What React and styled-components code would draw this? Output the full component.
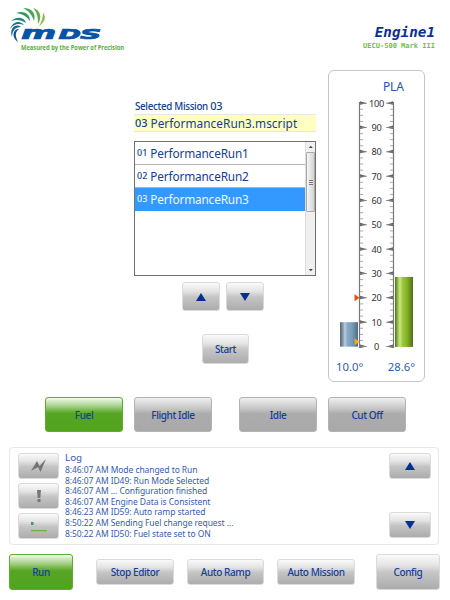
import React from "react";
import styled, { createGlobalStyle, css } from "styled-components";

const GlobalStyle = createGlobalStyle`
  * { box-sizing: border-box; }
  body { margin: 0; background: #fff; overflow: hidden; }
`;

const navy = "#12409c";

const Page = styled.main`
  width: 450px;
  height: 600px;
  display: flex;
  flex-direction: column;
  background: #fff;
  color: ${navy};
  font-family: "Noto Sans", "Open Sans", sans-serif;
`;

const Header = styled.header`
  height: 70px;
  flex: none;
  display: flex;
  justify-content: space-between;
  padding: 0 15px 0 0;
`;

const Titles = styled.div`
  display: flex;
  flex-direction: column;
  align-items: flex-end;
  padding-top: 23px;
  font-family: "DejaVu Sans Mono", monospace;
  font-weight: bold;
  white-space: nowrap;
`;

const EngineName = styled.h1`
  margin: 0;
  font-size: 14.3px;
  line-height: 18px;
  font-style: italic;
  color: #0a2f9a;
`;

const EngineModel = styled.div`
  font-size: 7px;
  line-height: 11px;
  letter-spacing: 0.02px;
  color: #6cc143;
`;

const Workspace = styled.section`
  height: 312px;
  flex: none;
  display: grid;
  grid-template-columns: 182px 97px;
  column-gap: 12px;
  padding-left: 134px;
`;

const MissionColumn = styled.div`
  display: flex;
  flex-direction: column;
  padding-top: 26px;
  white-space: nowrap;
`;

const Label = styled.span`
  font-size: ${(p) => p.$size || 11}px;
  letter-spacing: ${(p) => p.$track || 0}px;
  font-weight: ${(p) => p.$weight || 400};
  white-space: pre;
`;

const MissionCaption = styled.div`
  height: 18px;
  line-height: 16px;
  padding-left: 1px;
`;

const MissionFile = styled.div`
  height: 18px;
  line-height: 18px;
  padding-left: 1px;
  background: #ffffc0;
  border: solid #e4e7e3;
  border-width: 1px 0;
  display: flex;
  align-items: center;
`;

const ListBox = styled.div`
  height: 135px;
  margin-top: 9px;
  border: 1px solid #707070;
  display: flex;
`;

const ListRows = styled.div`
  flex: 1;
`;

const ListRow = styled.div`
  height: 23px;
  display: flex;
  align-items: center;
  gap: 3px;
  padding: 0 0 1px 2px;
  border-bottom: 1px solid #b4b4b4;
  ${(p) =>
    p.$selected &&
    css`
      background: #3399ff;
      color: #eef7ff;
      border-color: #3399ff;
    `}
`;

const ScrollTrack = styled.div`
  width: 10px;
  display: flex;
  flex-direction: column;
  align-items: center;
  background: #f0f0f0;
  border-left: 1px solid #ddd;
`;

const ScrollThumb = styled.div`
  width: 9px;
  height: 60px;
  border: 1px solid #aaa;
  border-radius: 1px;
  background: linear-gradient(90deg, #f5f5f5, #d4d4d4);
  display: flex;
  align-items: center;
  justify-content: center;
`;

const ScrollGrip = styled.div`
  width: 4px;
  height: 5px;
  background: repeating-linear-gradient(#777 0 1px, #e6e6e6 1px 2px);
`;

const ScrollSpace = styled.div`
  flex: 1;
`;

const StepButtons = styled.div`
  display: flex;
  gap: 6px;
  padding: 6px 0 0 48px;
`;

const grey = css`
  border: 1px solid #dadada;
  background: linear-gradient(#fafafa 0%, #e4e4e4 30%, #c5c5c5 52%, #acacac 100%);
`;

const flatGrey = css`
  border: 1px solid #b3b3b3;
  background: linear-gradient(#efefef 0%, #c9c9c9 30%, #acacac 48%, #a9a9a9 100%);
`;

const green = css`
  border: 1px solid #5cae2c;
  background: linear-gradient(#f3faef 0%, #a5d088 25%, #56a624 46%, #52a31c 100%);
`;

const tones = { grey, flatGrey, green };

const Button = styled.button`
  width: ${(p) => p.$w}px;
  height: ${(p) => p.$h}px;
  flex: none;
  padding: 0;
  border-radius: 3px;
  display: flex;
  align-items: center;
  justify-content: center;
  color: ${navy};
  font-family: "Noto Sans", sans-serif;
  font-weight: 500;
  font-size: 10px;
  letter-spacing: -0.4px;
  white-space: nowrap;
  ${(p) => tones[p.$tone || "grey"]}
`;

const StartRow = styled.div`
  display: flex;
  padding: 23px 0 0 68px;
`;

const GaugePanel = styled.div`
  height: 312px;
  border: 1px solid #c6c6c6;
  border-radius: 6px;
  display: flex;
  flex-direction: column;
`;

const GaugeTitle = styled.div`
  height: 27px;
  padding: 6px 0 0 54px;
  font-size: 12px;
  line-height: 20px;
  letter-spacing: -0.2px;
  color: #2952ad;
`;

const GaugeReadings = styled.div`
  display: flex;
  justify-content: space-between;
  padding: 4px 9px 0 7px;
  font-size: 11.3px;
  line-height: 16px;
  color: #365cae;
`;

const ModeBar = styled.nav`
  display: grid;
  grid-template-columns: 78px 78px 78px 78px;
  column-gap: 11px;
  padding: 15px 0 0 45px;

  & > :nth-child(n + 3) { margin-left: 16px; }
`;

const LogPanel = styled.section`
  height: 98px;
  flex: none;
  display: flex;
  margin: 15px 11px 0 9px;
  padding: 5px 7px 0 8px;
  border: 1px solid #e6e6e6;
  border-radius: 4px;
`;

const LogButtons = styled.div`
  display: flex;
  flex-direction: column;
  gap: ${(p) => p.$gap}px;
`;

const LogText = styled.div`
  flex: 1;
  padding-left: 6px;
  color: #365cb5;
  white-space: pre;
`;

const LogHeading = styled.div`
  font-size: 9.8px;
  line-height: 11px;
  margin: -1px 0 2px;
`;

const LogLine = styled.div`
  height: 10.6px;
  line-height: 10.6px;
  font-size: 8.5px;
  letter-spacing: -0.07px;
`;

const Footer = styled.footer`
  display: flex;
  align-items: center;
  padding: 9px 0 0 9px;
`;

const Group = styled.div`
  display: flex;
  gap: 13px;
  padding: 0 21px 0 23px;
`;

function Arrow({ down }) {
  return (
    <svg width="10" height="8" viewBox="0 0 10 8">
      <path d={down ? "M0 0H10L5 8Z" : "M0 8H10L5 0Z"} fill="#062f96" />
    </svg>
  );
}

function Caret({ down }) {
  return (
    <svg width="9" height="10" viewBox="0 0 9 10">
      <path d={down ? "M2.8 4H6.8L4.8 6.3Z" : "M2.8 6H6.8L4.8 3.7Z"} fill="#444" />
    </svg>
  );
}

function Logo() {
  return (
    <svg width="140" height="60" viewBox="0 0 140 60">
      <g>
        <path fill="#83bd45" d="M43 13C47 17 44 23 39 26C42 21 43 17 43 13Z" />
        <path fill="#67b046" d="M33 8C41 10 42 18 38 24C38 17 37 12 33 8Z" />
        <path fill="#4ba557" d="M23 8C33 8 36 14 34 21C32 15 29 11 23 8Z" />
        <path fill="#2f9768" d="M16 13C25 10 30 15 30 21C26 16 23 14 16 13Z" />
        <path fill="#228776" d="M11 21C18 15 25 18 26 23C21 20 17 19 11 21Z" />
        <path fill="#1c7388" d="M10 29C13 21 20 20 24 25C18 23 14 24 10 29Z" />
        <path fill="#166394" d="M12 37C9 28 16 23 21 27C15 27 12 31 12 37Z" />
        <path fill="#0c569e" d="M18 42C11 37 13 29 19 29C15 32 15 36 18 42Z" />
      </g>
      <g fill="#0753a5" stroke="#0753a5" strokeWidth=".7" fontFamily="DejaVu Sans, sans-serif" fontWeight="700" fontStyle="italic">
        <text transform="translate(21 38.700) scale(1.960 1)" fontSize="17.300">m</text>
        <text transform="translate(58.500 38.700) scale(2.050 1)" fontSize="13.200">D</text>
        <text transform="translate(80 38.700) scale(2.250 1)" fontSize="13.200">S</text>
      </g>
      <text x="21" y="50" textLength="103" lengthAdjust="spacingAndGlyphs" fontFamily="Open Sans, Noto Sans, sans-serif" fontWeight="700" fontSize="6.300" fill="#59ae36">
        Measured by the Power of Precision
      </text>
    </svg>
  );
}

/* Vertical position inside the gauge drawing for a scale value. */
const levelY = (v) => 248.5 - v * 2.433;

function Gauge() {
  const ticks = Array.from({ length: 41 }, (_, i) => i * 2.5);
  return (
    <svg width="95" height="257" viewBox="0 0 95 257">
      <defs>
        <linearGradient id="blueBar">
          <stop offset="0" stopColor="#52687b" />
          <stop offset=".15" stopColor="#8195a5" />
          <stop offset=".27" stopColor="#bccddd" />
          <stop offset=".42" stopColor="#88a8c7" />
          <stop offset=".65" stopColor="#789fbd" />
          <stop offset="1" stopColor="#536d84" />
        </linearGradient>
        <linearGradient id="greenBar">
          <stop offset="0" stopColor="#526e19" />
          <stop offset=".14" stopColor="#90b64a" />
          <stop offset=".27" stopColor="#cce586" />
          <stop offset=".42" stopColor="#9acb3b" />
          <stop offset=".65" stopColor="#85b526" />
          <stop offset="1" stopColor="#52701b" />
        </linearGradient>
      </defs>
      <rect x="11" y={levelY(10)} width="18" height="24.500" fill="url(#blueBar)" />
      <rect x="66" y={levelY(28.6)} width="18" height="70" fill="url(#greenBar)" />
      <path d="M30.500 4V250M64.500 4V250" stroke="#777" strokeWidth="1.200" />
      {ticks.map((v) => {
        const y = levelY(v);
        if (v % 10 === 0) {
          return (
            <g key={v}>
              <path d={`M31 ${y - 2}L38 ${y}L31 ${y + 1.5}ZM64 ${y - 2}L57 ${y}L64 ${y + 1.5}Z`} fill="#606060" />
              <path d={`M31 ${y}H38M57 ${y}H64`} stroke="#888" strokeWidth=".7" />
              <text x="47.500" y={y + 3.5} textAnchor="middle" fontFamily="Noto Sans, sans-serif" fontSize="9.200" letterSpacing="-.2" fill="#333">
                {v}
              </text>
            </g>
          );
        }
        return <path key={v} d={`M31 ${y}H34M61 ${y}H64`} stroke="#aaa" strokeWidth="1" />;
      })}
      <path d={`M25.500 ${levelY(20) - 3.5}L30.500 ${levelY(20)}L25.500 ${levelY(20) + 3.5}Z`} fill="#e9500c" />
      <path d={`M25.500 ${levelY(2) - 3.5}L30.500 ${levelY(2)}L25.500 ${levelY(2) + 3.5}Z`} fill="#f6a51c" />
    </svg>
  );
}

const missions = ["PerformanceRun1", "PerformanceRun2", "PerformanceRun3"];

const logLines = [
  "8:46:07 AM Mode changed to Run",
  "8:46:07 AM ID49: Run Mode Selected",
  "8:46:07 AM ... Configuration finished",
  "8:46:07 AM Engine Data is Consistent",
  "8:46:23 AM ID59: Auto ramp started",
  "8:50:22 AM Sending Fuel change request ...",
  "8:50:22 AM ID50: Fuel state set to ON",
];

export default function App() {
  return (
    <Page>
      <GlobalStyle />
      <Header>
        <Logo />
        <Titles>
          <EngineName>Engine1</EngineName>
          <EngineModel>UECU-500 Mark III</EngineModel>
        </Titles>
      </Header>
      <Workspace>
        <MissionColumn>
          <MissionCaption>
            <Label $size={9.8} $weight={500} $track={-0.32}>Selected Mission </Label>
            <Label $size={11} $weight={500} $track={-0.2}>03</Label>
          </MissionCaption>
          <MissionFile>
            <Label $size={11} $weight={500}>03 </Label>
            <Label $size={11.8} $track={0.05}>PerformanceRun3.mscript</Label>
          </MissionFile>
          <ListBox>
            <ListRows>
              {missions.map((name, i) => (
                <ListRow key={name} $selected={i === 2}>
                  <Label $size={9} $weight={500}>{`0${i + 1}`}</Label>
                  <Label $size={11.8} $track={-0.15}>{name}</Label>
                </ListRow>
              ))}
            </ListRows>
            <ScrollTrack>
              <Caret />
              <ScrollThumb><ScrollGrip /></ScrollThumb>
              <ScrollSpace />
              <Caret down />
            </ScrollTrack>
          </ListBox>
          <StepButtons>
            <Button $w={38} $h={29}><Arrow /></Button>
            <Button $w={38} $h={29}><Arrow down /></Button>
          </StepButtons>
          <StartRow>
            <Button $w={47} $h={30}>Start</Button>
          </StartRow>
        </MissionColumn>
        <GaugePanel>
          <GaugeTitle>PLA</GaugeTitle>
          <Gauge />
          <GaugeReadings>
            <span>10.0°</span>
            <span>28.6°</span>
          </GaugeReadings>
        </GaugePanel>
      </Workspace>
      <ModeBar>
        <Button $w={78} $h={35} $tone="green">Fuel</Button>
        <Button $w={78} $h={35} $tone="flatGrey">Flight Idle</Button>
        <Button $w={78} $h={35} $tone="flatGrey">Idle</Button>
        <Button $w={78} $h={35} $tone="flatGrey">Cut Off</Button>
      </ModeBar>
      <LogPanel>
        <LogButtons $gap={4}>
          <Button $w={41} $h={26}>
            <svg width="16" height="14" viewBox="0 0 16 14">
              <path d="M0 12L6 2L8.500 7L15 0L9.500 13L7 8Z" fill="#747474" />
            </svg>
          </Button>
          <Button $w={41} $h={26}>
            <svg width="4" height="12" viewBox="0 0 4 12">
              <path d="M0 0H4L3.300 8H.7ZM.5 9H3.500V12H.5Z" fill="#777" />
            </svg>
          </Button>
          <Button $w={41} $h={26}>
            <svg width="17" height="12" viewBox="0 0 17 12">
              <rect x="1" y="2" width="2.500" height="3" fill="#289b95" />
              <rect x="1" y="10" width="16" height="1.300" fill="#69b43d" />
            </svg>
          </Button>
        </LogButtons>
        <LogText>
          <LogHeading>Log</LogHeading>
          {logLines.map((line) => (
            <LogLine key={line}>{line}</LogLine>
          ))}
        </LogText>
        <LogButtons $gap={33}>
          <Button $w={42} $h={26}><Arrow /></Button>
          <Button $w={42} $h={26}><Arrow down /></Button>
        </LogButtons>
      </LogPanel>
      <Footer>
        <Button $w={64} $h={36} $tone="green">Run</Button>
        <Group>
          <Button $w={78} $h={26}>Stop Editor</Button>
          <Button $w={77} $h={26}>Auto Ramp</Button>
          <Button $w={78} $h={26}>Auto Mission</Button>
        </Group>
        <Button $w={64} $h={36}>Config</Button>
      </Footer>
    </Page>
  );
}
